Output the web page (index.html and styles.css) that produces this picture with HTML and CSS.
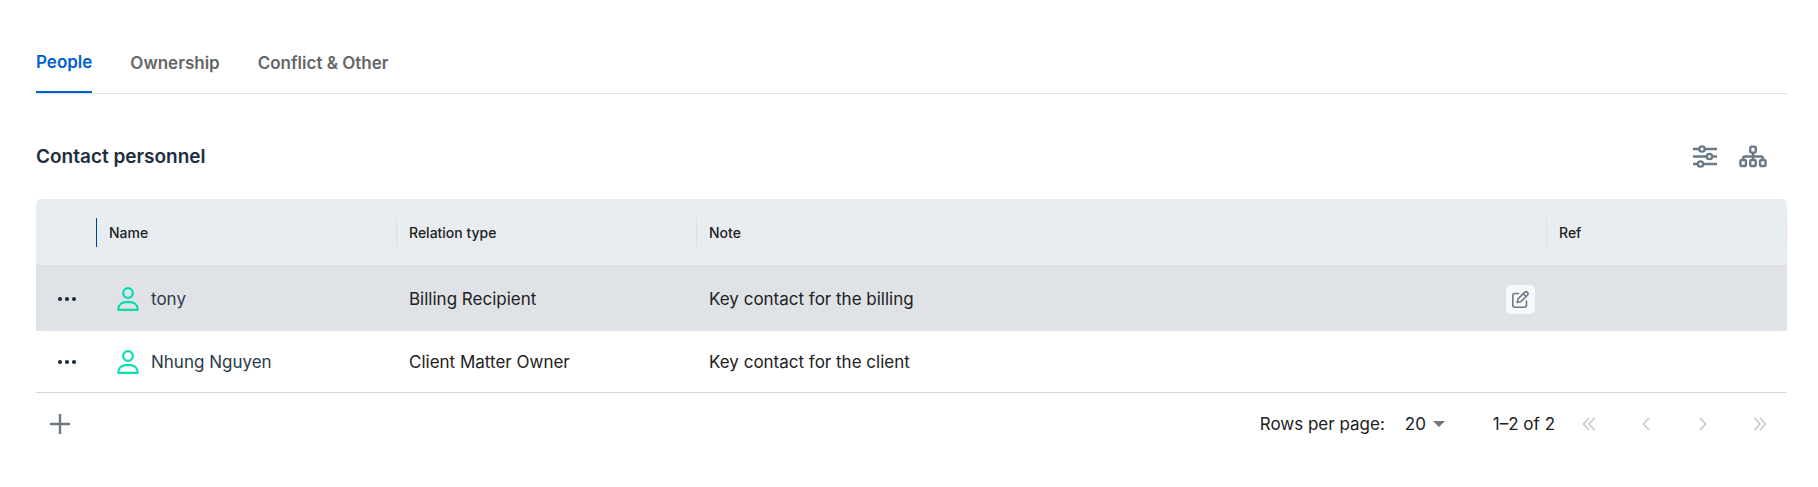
FILE: index.html
```html
<!DOCTYPE html>
<html lang="en">
<head>
    <meta charset="UTF-8">
    <meta name="viewport" content="width=device-width, initial-scale=1.0">
    <title>Contact personnel</title>
    <link rel="stylesheet" href="styles.css">
</head>
<body>
    <main class="page">
        <nav class="tabs" role="tablist">
            <button class="tab active" type="button" role="tab" aria-selected="true">People</button>
            <button class="tab" type="button" role="tab" aria-selected="false">Ownership</button>
            <button class="tab" type="button" role="tab" aria-selected="false">Conflict &amp; Other</button>
        </nav>

        <div class="section-header">
            <h2 class="title">Contact personnel</h2>
            <div class="tools">
                <button class="icon-btn" type="button" aria-label="Column settings">
                    <svg width="24" height="24" viewBox="0 0 24 24" fill="none" stroke="currentColor" stroke-width="2.3">
                        <path d="M0 4h6M12 4h12M0 11.500h13.500M19.500 11.500H24M0 19h4.500M10.500 19H24"/>
                        <circle cx="9" cy="4" r="2.700"/>
                        <circle cx="16.500" cy="11.500" r="2.700"/>
                        <circle cx="7.500" cy="19" r="2.700"/>
                    </svg>
                </button>
                <button class="icon-btn" type="button" aria-label="Hierarchy view">
                    <svg width="28" height="24" viewBox="0 0 28 24" fill="none" stroke="currentColor" stroke-width="2.4">
                        <rect x="11.200" y="1.600" width="5.600" height="6" rx="1.600"/>
                        <rect x="1.400" y="15" width="5.600" height="6" rx="1.600"/>
                        <rect x="11.200" y="15" width="5.600" height="6" rx="1.600"/>
                        <rect x="21" y="15" width="5.600" height="6" rx="1.600"/>
                        <path d="M14 7.500V15M4.200 15v-2q0-1.500 1.500-1.500h16.600q1.500 0 1.500 1.500v2"/>
                    </svg>
                </button>
            </div>
        </div>

        <table class="grid">
            <colgroup>
                <col class="col-menu">
                <col class="col-name">
                <col class="col-relation">
                <col class="col-note">
                <col class="col-ref">
            </colgroup>
            <thead>
                <tr>
                    <th class="first"><div class="head" aria-label="Actions"></div></th>
                    <th><div class="head">Name</div></th>
                    <th><div class="head">Relation type</div></th>
                    <th><div class="head">Note</div></th>
                    <th><div class="head">Ref</div></th>
                </tr>
            </thead>
            <tbody>
                <tr class="hovered">
                    <td class="menu-cell">
                        <button class="icon-btn dots" type="button" aria-label="Row menu">
                            <svg width="20" height="6" viewBox="0 0 20 6" fill="currentColor">
                                <circle cx="3" cy="3" r="2.1"/>
                                <circle cx="10" cy="3" r="2.1"/>
                                <circle cx="17" cy="3" r="2.1"/>
                            </svg>
                        </button>
                    </td>
                    <td>
                        <div class="person">
                            <svg width="22" height="24" viewBox="0 0 22 24" fill="none" stroke="currentColor" stroke-width="2.3" stroke-linejoin="round">
                                <circle cx="11" cy="6" r="4.800"/>
                                <path d="M1.300 22.800c0-5 3.600-7.600 7.700-7.600h4c4.100 0 7.700 2.600 7.700 7.600z"/>
                            </svg>
                            <span>tony</span>
                        </div>
                    </td>
                    <td>Billing Recipient</td>
                    <td>
                        <div class="note">
                            <span>Key contact for the billing</span>
                            <button class="icon-btn edit" type="button" aria-label="Edit note">
                                <svg width="17" height="17" viewBox="0 0 17 17" fill="none" stroke="currentColor" stroke-width="1.600" stroke-linecap="round" stroke-linejoin="round">
                                    <path d="M6.500 2.500H3Q.8 2.500.8 4.700V14q0 2.200 2.200 2.200h9.300q2.200 0 2.200-2.200v-4"/>
                                    <path d="M5.200 11.500l.8-3.600 6.600-6.500a1.950 1.950 0 0 1 2.800 2.800L8.800 10.700zM11.300 2.700l2.800 2.800"/>
                                </svg>
                            </button>
                        </div>
                    </td>
                    <td></td>
                </tr>
                <tr>
                    <td class="menu-cell">
                        <button class="icon-btn dots" type="button" aria-label="Row menu">
                            <svg width="20" height="6" viewBox="0 0 20 6" fill="currentColor">
                                <circle cx="3" cy="3" r="2.1"/>
                                <circle cx="10" cy="3" r="2.1"/>
                                <circle cx="17" cy="3" r="2.1"/>
                            </svg>
                        </button>
                    </td>
                    <td>
                        <div class="person">
                            <svg width="22" height="24" viewBox="0 0 22 24" fill="none" stroke="currentColor" stroke-width="2.3" stroke-linejoin="round">
                                <circle cx="11" cy="6" r="4.800"/>
                                <path d="M1.300 22.800c0-5 3.600-7.600 7.700-7.600h4c4.100 0 7.700 2.600 7.700 7.600z"/>
                            </svg>
                            <span>Nhung Nguyen</span>
                        </div>
                    </td>
                    <td>Client Matter Owner</td>
                    <td>Key contact for the client</td>
                    <td></td>
                </tr>
            </tbody>
        </table>

        <footer class="footer">
            <button class="icon-btn add" type="button" aria-label="Add contact">
                <svg width="20" height="20" viewBox="0 0 20 20" fill="none" stroke="currentColor" stroke-width="2.4">
                    <path d="M10 0v20M0 10h20"/>
                </svg>
            </button>
            <div class="pagination">
                <label for="rows">Rows per page:</label>
                <div class="select">
                    <select id="rows">
                        <option selected>20</option>
                        <option>50</option>
                        <option>100</option>
                    </select>
                    <svg class="caret" width="12" height="6" viewBox="0 0 12 6" fill="currentColor">
                        <path d="M0 0h12L6 6z"/>
                    </svg>
                </div>
                <span class="range">1–2 of 2</span>
                <div class="pager">
                    <button class="icon-btn" type="button" aria-label="First page" disabled>
                        <svg width="14" height="14" viewBox="0 0 14 14" fill="none" stroke="currentColor" stroke-width="1.500">
                            <path d="M7 1L1.500 7 7 13M12.500 1L7 7l5.500 6"/>
                        </svg>
                    </button>
                    <button class="icon-btn" type="button" aria-label="Previous page" disabled>
                        <svg width="14" height="14" viewBox="0 0 14 14" fill="none" stroke="currentColor" stroke-width="1.500">
                            <path d="M10 1L4.500 7l5.500 6"/>
                        </svg>
                    </button>
                    <button class="icon-btn" type="button" aria-label="Next page" disabled>
                        <svg width="14" height="14" viewBox="0 0 14 14" fill="none" stroke="currentColor" stroke-width="1.500">
                            <path d="M4 1l5.500 6L4 13"/>
                        </svg>
                    </button>
                    <button class="icon-btn" type="button" aria-label="Last page" disabled>
                        <svg width="14" height="14" viewBox="0 0 14 14" fill="none" stroke="currentColor" stroke-width="1.500">
                            <path d="M1.500 1L7 7l-5.500 6M7 1l5.500 6L7 13"/>
                        </svg>
                    </button>
                </div>
            </div>
        </footer>
    </main>
</body>
</html>
```
FILE: styles.css
```css
* {
    box-sizing: border-box;
}

body {
    margin: 0;
    background-color: #ffffff;
    color: #212121;
    font-family: Inter, Roboto, sans-serif;
    font-size: 17px;
    line-height: 24px;
}

button,
select {
    font: inherit;
    color: inherit;
    background: none;
    border: 0;
    padding: 0;
}

svg {
    display: block;
}

.page {
    padding: 32px 31px 32px 36px;
}

/* Tabs */
.tabs {
    display: flex;
    gap: 38px;
    border-bottom: 1px solid #e0e0e0;
}

.tab {
    height: 61px;
    font-weight: 600;
    color: #666666;
    cursor: pointer;
}

.tab.active {
    color: #005fd0;
    border-bottom: 2px solid #005fd0;
}

/* Title and tools */
.section-header {
    display: flex;
    justify-content: space-between;
    align-items: center;
    padding: 44px 20px 24px 0;
    height: 105px;
}

.title {
    margin: 0;
    font-size: 19px;
    font-weight: 600;
    color: #1c2e3d;
}

.tools {
    display: flex;
    gap: 22px;
}

.icon-btn {
    display: flex;
    justify-content: center;
    align-items: center;
    color: #6b7985;
    cursor: pointer;
}

/* Table */
.grid {
    width: 100%;
    table-layout: fixed;
    border-collapse: separate;
    border-spacing: 0;
}

.col-menu {
    width: 61px;
}

.col-name,
.col-relation {
    width: 300px;
}

.col-ref {
    width: 240px;
}

.grid th {
    height: 68px;
    padding: 0;
    background-color: #e8edf1;
    border-bottom: 2px solid #e0e0e0;
    font-size: 14px;
    font-weight: 500;
    text-align: left;
}

.grid th:first-child {
    border-top-left-radius: 5px;
}

.grid th:last-child {
    border-top-right-radius: 5px;
}

.head {
    height: 29px;
    padding-left: 12px;
    line-height: 29px;
    border-right: 1px solid #dddfe2;
}

.first .head {
    border-right: 1px solid #00429a;
}

.grid td {
    height: 62px;
    padding: 0 12px;
    border-bottom: 1px solid #d5d8db;
}

.hovered td {
    height: 64px;
    background-color: #dfe2e7;
    border-bottom: 0;
}

.grid .menu-cell {
    padding: 0 10px 0 21px;
}

.dots {
    height: 24px;
    color: #1c2e3d;
}

.person {
    display: flex;
    align-items: center;
    gap: 12px;
    padding-left: 8px;
    color: #2a3b4a;
}

.person svg {
    color: #0bdcb0;
}

.note {
    display: flex;
    justify-content: space-between;
    align-items: center;
}

.edit {
    width: 29px;
    height: 29px;
    border-radius: 5px;
    background-color: #f7f9f9;
}

/* Footer */
.footer {
    display: flex;
    justify-content: space-between;
    align-items: center;
    height: 62px;
    padding: 0 20px 0 14px;
}

.pagination {
    display: flex;
    align-items: center;
}

.select {
    position: relative;
    margin-left: 20px;
}

.select select {
    display: block;
    width: 40px;
    appearance: none;
}

.caret {
    position: absolute;
    right: 0;
    top: 9px;
    color: #757575;
    pointer-events: none;
}

.range {
    margin-left: 48px;
}

.pager {
    display: flex;
    gap: 43px;
    margin-left: 27px;
}

.pager .icon-btn {
    color: #c3c6c9;
    cursor: default;
}
```
